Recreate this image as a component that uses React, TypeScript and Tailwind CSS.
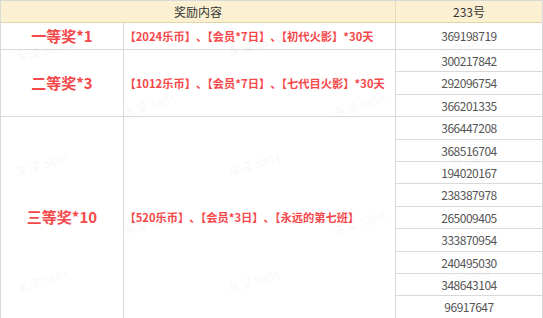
const font = { fontFamily: '"Noto Sans CJK SC", "Noto Sans", sans-serif' };

const tiers = [
  {
    name: "一等奖*1",
    reward: "【2024乐币】、【会员*7日】、【初代火影】*30天",
    ids: ["369198719"],
  },
  {
    name: "二等奖*3",
    reward: "【1012乐币】、【会员*7日】、【七代目火影】*30天",
    ids: ["300217842", "292096754", "366201335"],
  },
  {
    name: "三等奖*10",
    reward: "【520乐币】、【会员*3日】、【永远的第七班】",
    ids: [
      "366447208",
      "368516704",
      "194020167",
      "238387978",
      "265009405",
      "333870954",
      "240495030",
      "348643104",
      "96917647",
    ],
  },
];

const spans = ["row-span-1", "row-span-3", "row-span-9"];

const marks = [
  [16, 42],
  [228, 36],
  [438, 38],
  [123, 96],
  [333, 96],
  [16, 155],
  [228, 155],
  [438, 152],
  [123, 214],
  [333, 214],
  [16, 272],
  [228, 272],
  [438, 270],
];

// opening brackets render half-width in the source, closing ones full-width
function Reward({ text }: { text: string }) {
  const parts = text.split("【");
  return (
    <span className="[text-spacing-trim:space-all]">
      {parts.map((p, i) =>
        i === 0 ? (
          p
        ) : (
          <span key={i}>
            <span className="ml-[-0.5em]">【</span>
            {p}
          </span>
        )
      )}
    </span>
  );
}

export default function App() {
  let k = 0;
  return (
    <div className="relative h-[318px] w-[543px] overflow-hidden bg-white" style={font}>
      <div className="bg-[#d9d9d9] px-px pt-px">
        <div className="grid h-[22px] grid-cols-[394px_146px] gap-x-px border-b border-[#e3d6a6] bg-[#e6dcb6]">
          <div className="flex items-center justify-center bg-[#fbf1d2] text-[12px] text-[#333]">
            奖励内容
          </div>
          <div className="flex items-center justify-center bg-[#fbf1d2] text-[12px] text-[#333]">
            233号
          </div>
        </div>
        <div className="grid grid-cols-[122px_271px_146px] grid-rows-[26px_21px_22px_21px_22px_21px_21px_22px_21px_22px_21px_21px_22px] gap-px">
          {tiers.map((t, i) => [
            <div
              key={"n" + i}
              className={`${spans[i]} col-start-1 flex items-center justify-center bg-white text-[15px] font-bold text-[#f5484a]`}
            >
              {t.name}
            </div>,
            <div
              key={"r" + i}
              className={`${spans[i]} col-start-2 flex items-center whitespace-nowrap bg-white pl-[6px] text-[11.25px] font-bold text-[#f5484a]`}
            >
              <Reward text={t.reward} />
            </div>,
            ...t.ids.map((id) => (
              <div
                key={"i" + k++}
                className="col-start-3 flex items-center justify-center bg-white text-[12px] tracking-[-0.5px] text-[#555]"
              >
                {id}
              </div>
            )),
          ])}
        </div>
      </div>
      {marks.map(([x, y], i) => (
        <span
          key={i}
          className="pointer-events-none absolute -rotate-[16deg] whitespace-nowrap text-[12px] text-black/[0.05]"
          style={{ left: x, top: y }}
        >
          朱漠 5804
        </span>
      ))}
    </div>
  );
}
